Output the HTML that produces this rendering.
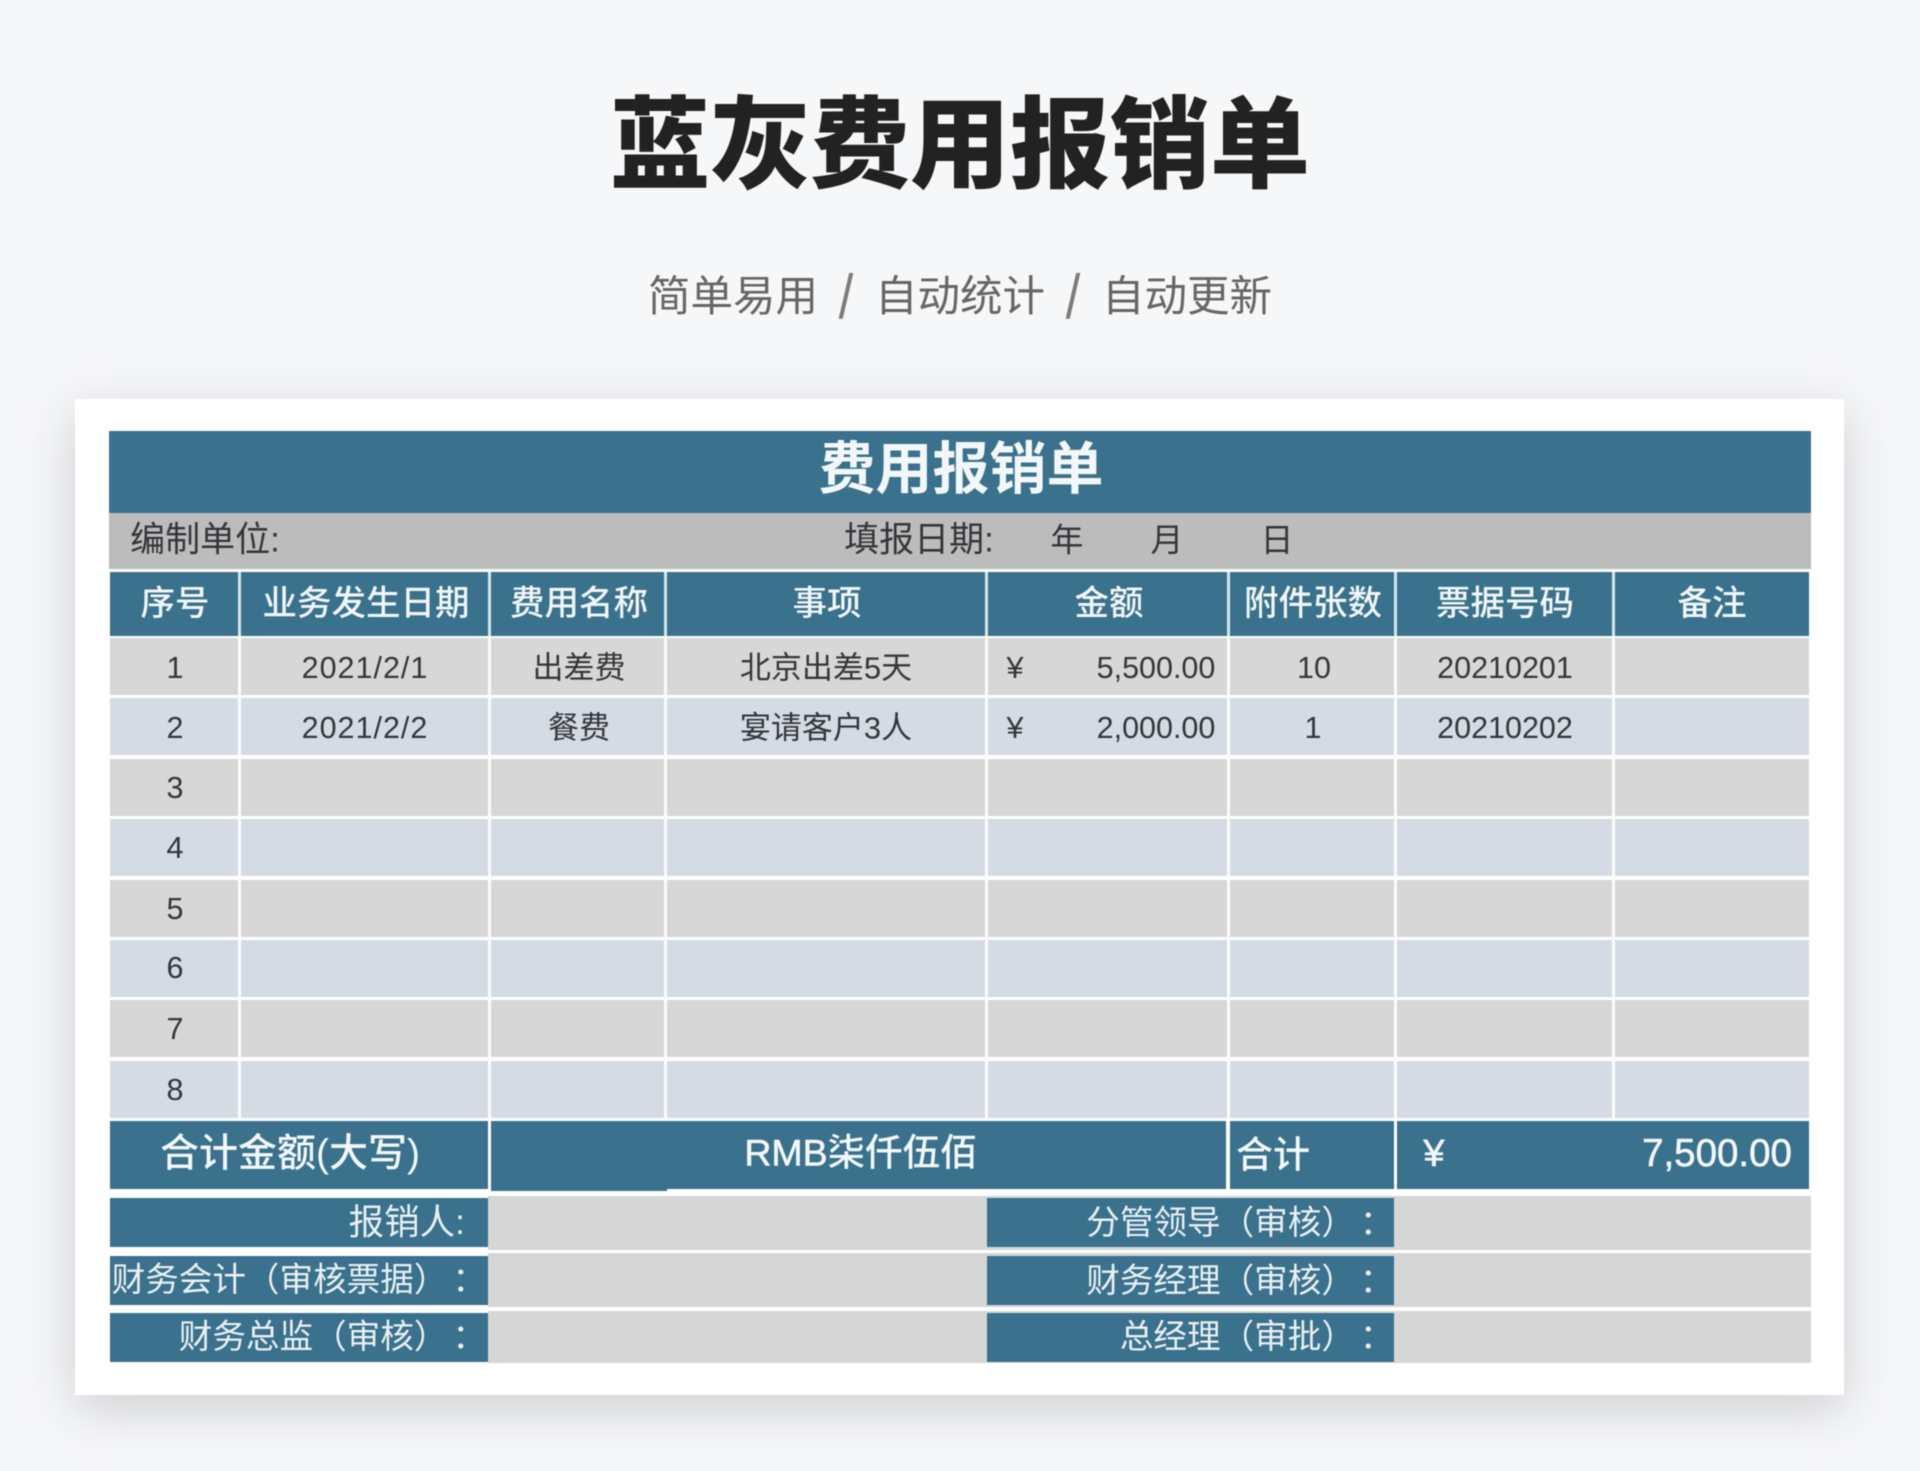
<!DOCTYPE html>
<html lang="zh-CN">
<head>
<meta charset="utf-8">
<title>蓝灰费用报销单</title>
<style>
html,body{margin:0;padding:0}
body{width:1920px;height:1471px;position:relative;overflow:hidden;background:#f6f7f9;font-family:"Liberation Sans","Noto Sans CJK SC",sans-serif}
#p{position:absolute;left:0;top:0;width:1920px;height:1471px;filter:blur(.45px)}
#p div{position:absolute}
.b{background:#3a718d}
.r{left:110px;width:1699px;height:57px}
.a{background:#d8d7d7}
.l{background:#d5dbe4}
.v{width:3px;top:636px;height:483px;background:#fbfcfc}
.g{background:#d6d6d6}
.h{width:3px;top:572px;height:64px;background:#d5e6ec}
.c{transform:translate(-50%,-50%);white-space:nowrap;line-height:1}
.th{color:#f0f6f8;font-size:34.5px;font-weight:500;top:604px}
.td{color:#33363a;font-size:30.5px}
.z{font-size:31px}
.w{color:#f2f7f9;font-weight:500}
.k{-webkit-text-stroke:.6px #f2f7f9}
.s{color:#e9f0f3;font-size:33.6px;line-height:1;white-space:nowrap;text-align:right;text-spacing-trim:space-all}
.j{font-family:"Noto Sans CJK JP",sans-serif;position:relative;left:5px}
.u{font-size:42.5px;font-weight:400;color:#666;top:298px}
.y{font-size:62px;font-weight:400;color:#7c7c7c;top:298px;transform:translate(-50%,-50%) scaleX(.85)}
.d{font-size:35px;color:#33363a;top:540px}
</style>
</head>
<body>
<div id="p">
  <div class="c" style="left:960px;top:146px;font-size:100px;font-weight:900;color:#222;">蓝灰费用报销单</div>
  <div class="c u" style="left:733px">简单易用</div>
  <div class="c y" style="left:846px">/</div>
  <div class="c u" style="left:960px">自动统计</div>
  <div class="c y" style="left:1073px">/</div>
  <div class="c u" style="left:1187px">自动更新</div>

  <div style="left:75px;top:399px;width:1769px;height:996px;background:#fff;box-shadow:0 14px 48px rgba(40,50,55,.2)"></div>

  <div class="b" style="left:109px;top:431px;width:1702px;height:82px"></div>
  <div class="c w" style="left:961px;top:470px;font-size:57px;font-weight:600;">费用报销单</div>
  <div style="left:109px;top:513px;width:1702px;height:56px;background:#bdbcbc"></div>
  <div class="c d" style="left:205px">编制单位:</div>
  <div class="c d" style="left:919px">填报日期:</div>
  <div class="c d" style="left:1067px;font-size:33px">年</div>
  <div class="c d" style="left:1167px;font-size:33px">月</div>
  <div class="c d" style="left:1277px;font-size:33px">日</div>

  <div class="b" style="left:110px;top:572px;width:1699px;height:64px"></div>
  <div class="h" style="left:238px"></div>
  <div class="h" style="left:488px"></div>
  <div class="h" style="left:664px"></div>
  <div class="h" style="left:985px"></div>
  <div class="h" style="left:1227px"></div>
  <div class="h" style="left:1394px"></div>
  <div class="h" style="left:1612px"></div>
  <div class="c th" style="left:175px">序号</div>
  <div class="c th" style="left:366px">业务发生日期</div>
  <div class="c th" style="left:579px">费用名称</div>
  <div class="c th" style="left:827px">事项</div>
  <div class="c th" style="left:1109px">金额</div>
  <div class="c th" style="left:1313px">附件张数</div>
  <div class="c th" style="left:1505px">票据号码</div>
  <div class="c th" style="left:1712px">备注</div>

  <div class="r a" style="top:638px"></div>
  <div class="r l" style="top:698px"></div>
  <div class="r a" style="top:759px"></div>
  <div class="r l" style="top:819px"></div>
  <div class="r a" style="top:880px"></div>
  <div class="r l" style="top:940px"></div>
  <div class="r a" style="top:1000px"></div>
  <div class="r l" style="top:1061px"></div>

  <div class="v" style="left:238px"></div>
  <div class="v" style="left:488px"></div>
  <div class="v" style="left:664px"></div>
  <div class="v" style="left:985px"></div>
  <div class="v" style="left:1227px"></div>
  <div class="v" style="left:1394px"></div>
  <div class="v" style="left:1612px"></div>

  <div class="c td" style="left:175px;top:668px">1</div>
  <div class="c td" style="left:175px;top:728px">2</div>
  <div class="c td" style="left:175px;top:788px">3</div>
  <div class="c td" style="left:175px;top:848px">4</div>
  <div class="c td" style="left:175px;top:909px">5</div>
  <div class="c td" style="left:175px;top:968px">6</div>
  <div class="c td" style="left:175px;top:1029px">7</div>
  <div class="c td" style="left:175px;top:1090px">8</div>

  <div class="c td" style="left:365px;top:668px;letter-spacing:1px">2021/2/1</div>
  <div class="c td" style="left:365px;top:728px;letter-spacing:1px">2021/2/2</div>
  <div class="c td z" style="left:579px;top:668px">出差费</div>
  <div class="c td z" style="left:579px;top:728px">餐费</div>
  <div class="c td z" style="left:826px;top:668px">北京出差5天</div>
  <div class="c td z" style="left:826px;top:728px">宴请客户3人</div>
  <div class="c td" style="left:1015px;top:668px">¥</div>
  <div class="c td" style="left:1015px;top:728px">¥</div>
  <div class="c td" style="left:1156px;top:668px">5,500.00</div>
  <div class="c td" style="left:1156px;top:728px">2,000.00</div>
  <div class="c td" style="left:1314px;top:668px">10</div>
  <div class="c td" style="left:1313px;top:728px">1</div>
  <div class="c td" style="left:1505px;top:668px">20210201</div>
  <div class="c td" style="left:1505px;top:728px">20210202</div>

  <div class="b" style="left:110px;top:1121px;width:378px;height:68px"></div>
  <div class="b" style="left:491px;top:1121px;width:735px;height:68px"></div>
  <div class="b" style="left:491px;top:1121px;width:176px;height:70px"></div>
  <div class="b" style="left:1230px;top:1121px;width:164px;height:68px"></div>
  <div class="b" style="left:1397px;top:1121px;width:412px;height:68px"></div>
  <div class="c w" style="left:290px;top:1154px;font-size:39px;">合计金额(大写)</div>
  <div class="c w" style="left:861px;top:1153px;font-size:37.5px;"><span class="k">RMB</span>柒仟伍佰</div>
  <div class="c w" style="left:1273px;top:1155px;font-size:37px;">合计</div>
  <div class="c w k" style="left:1434px;top:1154px;font-size:38px;">¥</div>
  <div class="c w k" style="left:1717px;top:1154px;font-size:38.5px;">7,500.00</div>

  <div class="g" style="left:488px;top:1196px;width:1323px;height:54px"></div>
  <div class="g" style="left:488px;top:1253px;width:1323px;height:54px"></div>
  <div class="g" style="left:488px;top:1311px;width:1323px;height:52px"></div>

  <div class="b" style="left:110px;top:1198px;width:378px;height:49px"></div>
  <div class="b" style="left:110px;top:1256px;width:378px;height:49px"></div>
  <div class="b" style="left:110px;top:1313px;width:378px;height:49px"></div>
  <div class="b" style="left:987px;top:1198px;width:407px;height:49px"></div>
  <div class="b" style="left:987px;top:1256px;width:407px;height:49px"></div>
  <div class="b" style="left:987px;top:1313px;width:407px;height:49px"></div>

  <div class="s" style="right:1455px;top:1205px;font-size:35.5px">报销人:</div>
  <div class="s" style="right:1439px;top:1260px">财务会计（审核票据）<span class="j">：</span></div>
  <div class="s" style="right:1439px;top:1317px">财务总监（审核）<span class="j">：</span></div>
  <div class="s" style="right:531.5px;top:1203px">分管领导（审核）<span class="j">：</span></div>
  <div class="s" style="right:531.5px;top:1261px">财务经理（审核）<span class="j">：</span></div>
  <div class="s" style="right:531.5px;top:1317px">总经理（审批）<span class="j">：</span></div>
</div>
</body>
</html>
